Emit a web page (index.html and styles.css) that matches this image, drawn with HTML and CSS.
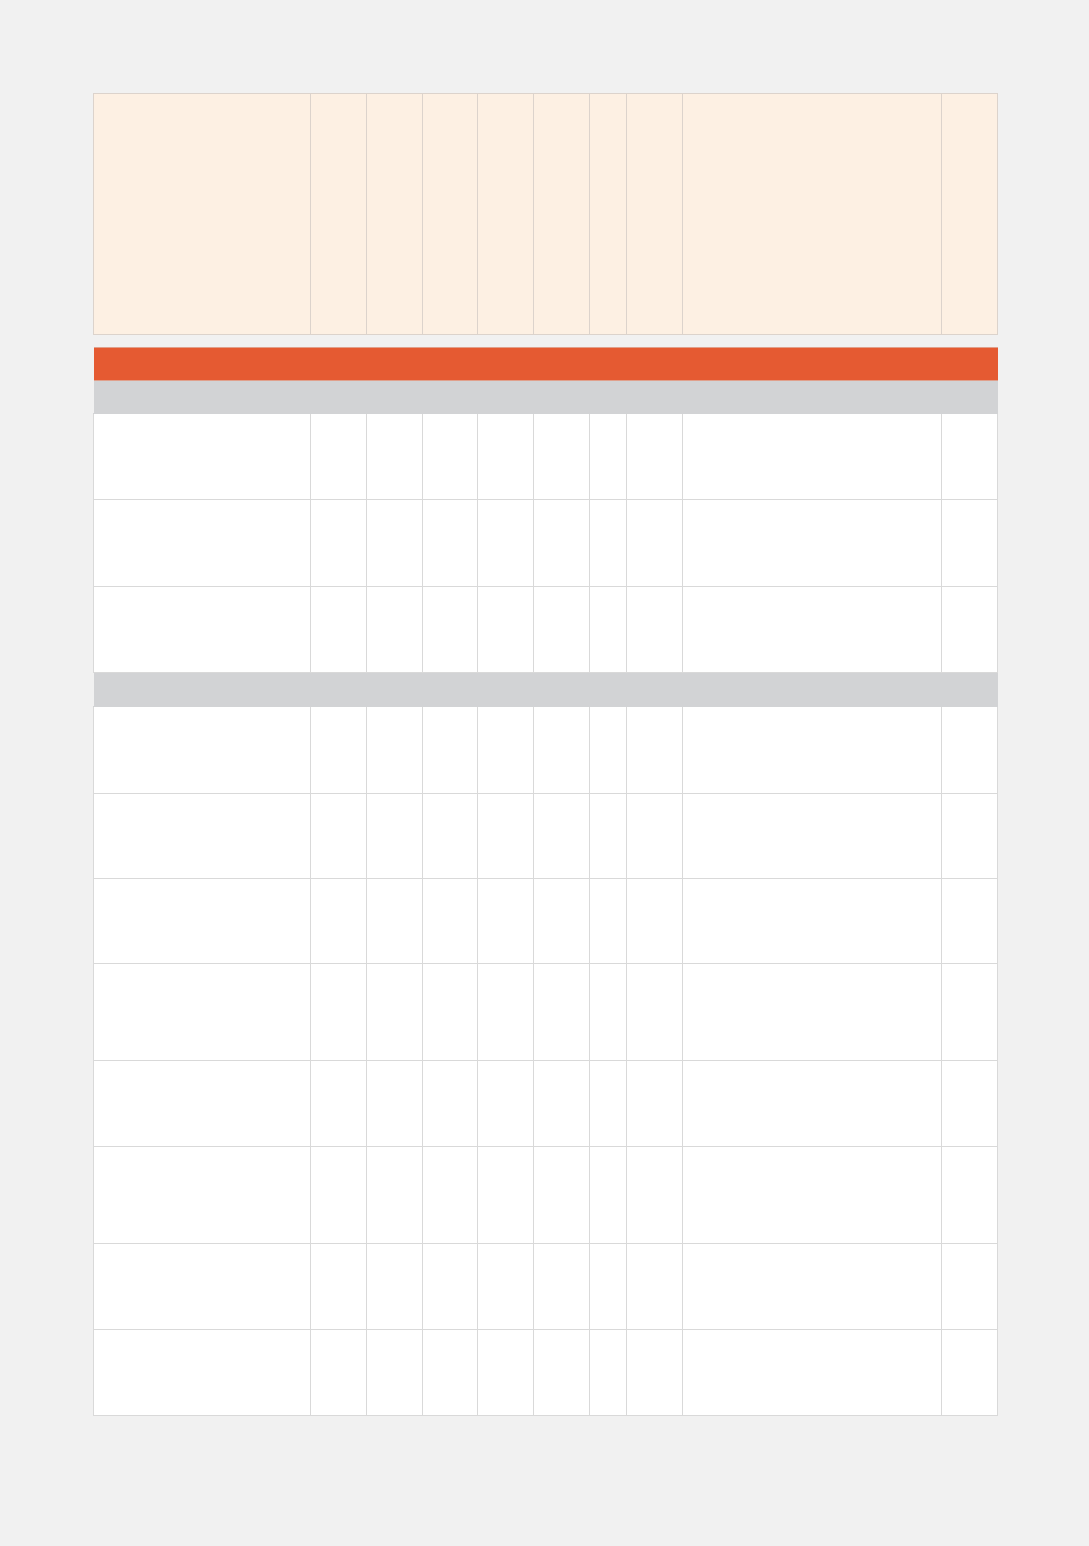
FILE: index.html
```html
<!DOCTYPE html>
<html>
<head>
<meta charset="utf-8">
<link rel="stylesheet" href="styles.css">
</head>
<body>
<div class="page">
  <table class="grid head">
    <colgroup>
      <col class="c1"><col class="c2"><col class="c2"><col class="c3"><col class="c2"><col class="c2"><col class="c4"><col class="c2"><col class="c5"><col class="c2">
    </colgroup>
    <tr class="hrow"><td></td><td></td><td></td><td></td><td></td><td></td><td></td><td></td><td></td><td></td></tr>
  </table>

  <table class="grid body">
    <colgroup>
      <col class="c1"><col class="c2"><col class="c2"><col class="c3"><col class="c2"><col class="c2"><col class="c4"><col class="c2"><col class="c5"><col class="c2">
    </colgroup>
    <tr class="band orange"><td colspan="10"></td></tr>
    <tr class="band grey"><td colspan="10"></td></tr>
    <tr class="r86"><td></td><td></td><td></td><td></td><td></td><td></td><td></td><td></td><td></td><td></td></tr>
    <tr class="r87"><td></td><td></td><td></td><td></td><td></td><td></td><td></td><td></td><td></td><td></td></tr>
    <tr class="r86"><td></td><td></td><td></td><td></td><td></td><td></td><td></td><td></td><td></td><td></td></tr>
    <tr class="band grey g2"><td colspan="10"></td></tr>
    <tr class="r87"><td></td><td></td><td></td><td></td><td></td><td></td><td></td><td></td><td></td><td></td></tr>
    <tr class="r85"><td></td><td></td><td></td><td></td><td></td><td></td><td></td><td></td><td></td><td></td></tr>
    <tr class="r85"><td></td><td></td><td></td><td></td><td></td><td></td><td></td><td></td><td></td><td></td></tr>
    <tr class="r97"><td></td><td></td><td></td><td></td><td></td><td></td><td></td><td></td><td></td><td></td></tr>
    <tr class="r86"><td></td><td></td><td></td><td></td><td></td><td></td><td></td><td></td><td></td><td></td></tr>
    <tr class="r97"><td></td><td></td><td></td><td></td><td></td><td></td><td></td><td></td><td></td><td></td></tr>
    <tr class="r86"><td></td><td></td><td></td><td></td><td></td><td></td><td></td><td></td><td></td><td></td></tr>
    <tr class="r86"><td></td><td></td><td></td><td></td><td></td><td></td><td></td><td></td><td></td><td></td></tr>
  </table>
</div>
</body>
</html>
```
FILE: styles.css
```css
html, body {
  margin: 0;
  padding: 0;
  background: #f1f1f1;
  font-family: "Liberation Sans", Arial, sans-serif;
}
.page {
  width: 1089px;
  height: 1546px;
  box-sizing: border-box;
  padding: 93px 92px 0 93px;
}
.grid {
  border-collapse: collapse;
  table-layout: fixed;
  width: 904px;
}
.grid td {
  padding: 0;
  border: 1px solid #d9d9d9;
}
.c1 { width: 217px; }
.c2 { width: 56px; }
.c3 { width: 55px; }
.c4 { width: 37px; }
.c5 { width: 259px; }

.head td {
  background: #fdf0e3;
  border-color: #dcd3cc;
}
.hrow { height: 241px; }

.body { margin-top: 12px; }
.body td { background: #ffffff; }
.band td { border-left: none; border-right: none; }
.orange td {
  background: #e55a32;
  border-color: #e0a08c;
  height: 32px;
}
.grey td {
  background: #d2d3d5;
  border-color: #d2d3d5;
  height: 32px;
}
.g2 td { height: 33px; }
.r85 td { height: 84px; }
.r86 td { height: 85px; }
.r87 td { height: 86px; }
.r97 td { height: 96px; }
```
